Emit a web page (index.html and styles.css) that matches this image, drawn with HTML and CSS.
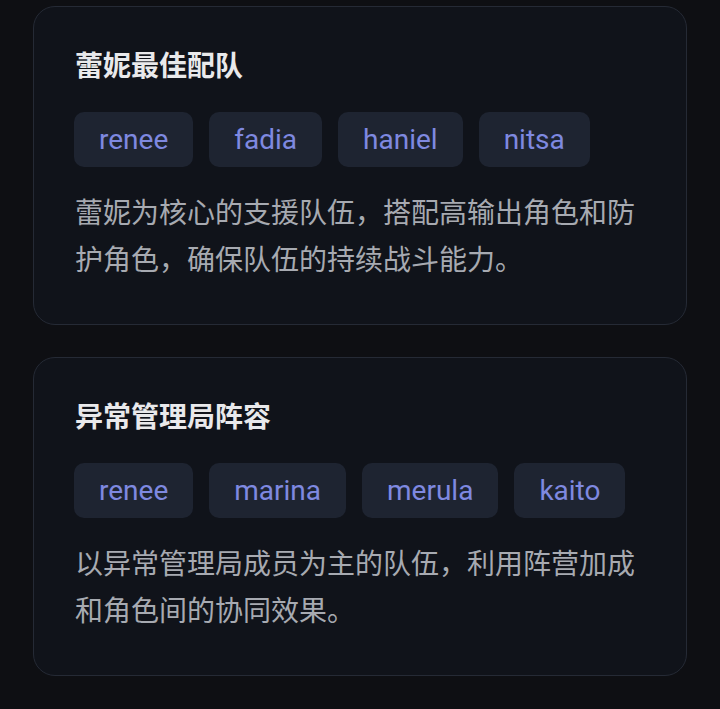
FILE: index.html
```html
<!DOCTYPE html>
<html>

<head>
    <meta charset="utf-8" />
    <title>推荐阵容</title>
    <meta name="viewport" content="width=device-width, initial-scale=1" />
    <link rel="stylesheet" href="styles.css">
</head>

<body>
    <div class="content">
        <div class="card">
            <h2>蕾妮最佳配队</h2>
            <div class="tags">
                <span class="tag">renee</span>
                <span class="tag">fadia</span>
                <span class="tag">haniel</span>
                <span class="tag">nitsa</span>
            </div>
            <p>蕾妮为核心的支援队伍，搭配高输出角色和防护角色，确保队伍的持续战斗能力。</p>
        </div>

        <div class="card">
            <h2>异常管理局阵容</h2>
            <div class="tags">
                <span class="tag">renee</span>
                <span class="tag">marina</span>
                <span class="tag">merula</span>
                <span class="tag">kaito</span>
            </div>
            <p>以异常管理局成员为主的队伍，利用阵营加成和角色间的协同效果。</p>
        </div>
    </div>
</body>

</html>
```

FILE: styles.css
```css
html {
    font-family: Roboto, "Noto Sans CJK SC", sans-serif;
}

body {
    margin: 0;
    background-color: #0e0f13;
}

.content {
    display: flex;
    flex-direction: column;
    gap: 32px;
    padding: 6px 33px 33px;
}

.card {
    background-color: #10131a;
    border: 1px solid #252a35;
    border-radius: 22px;
    padding: 40px 40px;
}

h2 {
    margin: 0 0 26px 1px;
    font-size: 28px;
    line-height: 39px;
    font-weight: bold;
    color: #e9e9eb;
}

.tags {
    display: flex;
    flex-wrap: wrap;
    gap: 16px;
}

.tag {
    background-color: #1e2431;
    color: #7f89e0;
    font-size: 28px;
    line-height: 39px;
    padding: 8px 25px;
    border-radius: 10px;
}

p {
    margin: 23px 0 0 1px;
    font-size: 28px;
    line-height: 47px;
    color: #a7aab1;
}
```
